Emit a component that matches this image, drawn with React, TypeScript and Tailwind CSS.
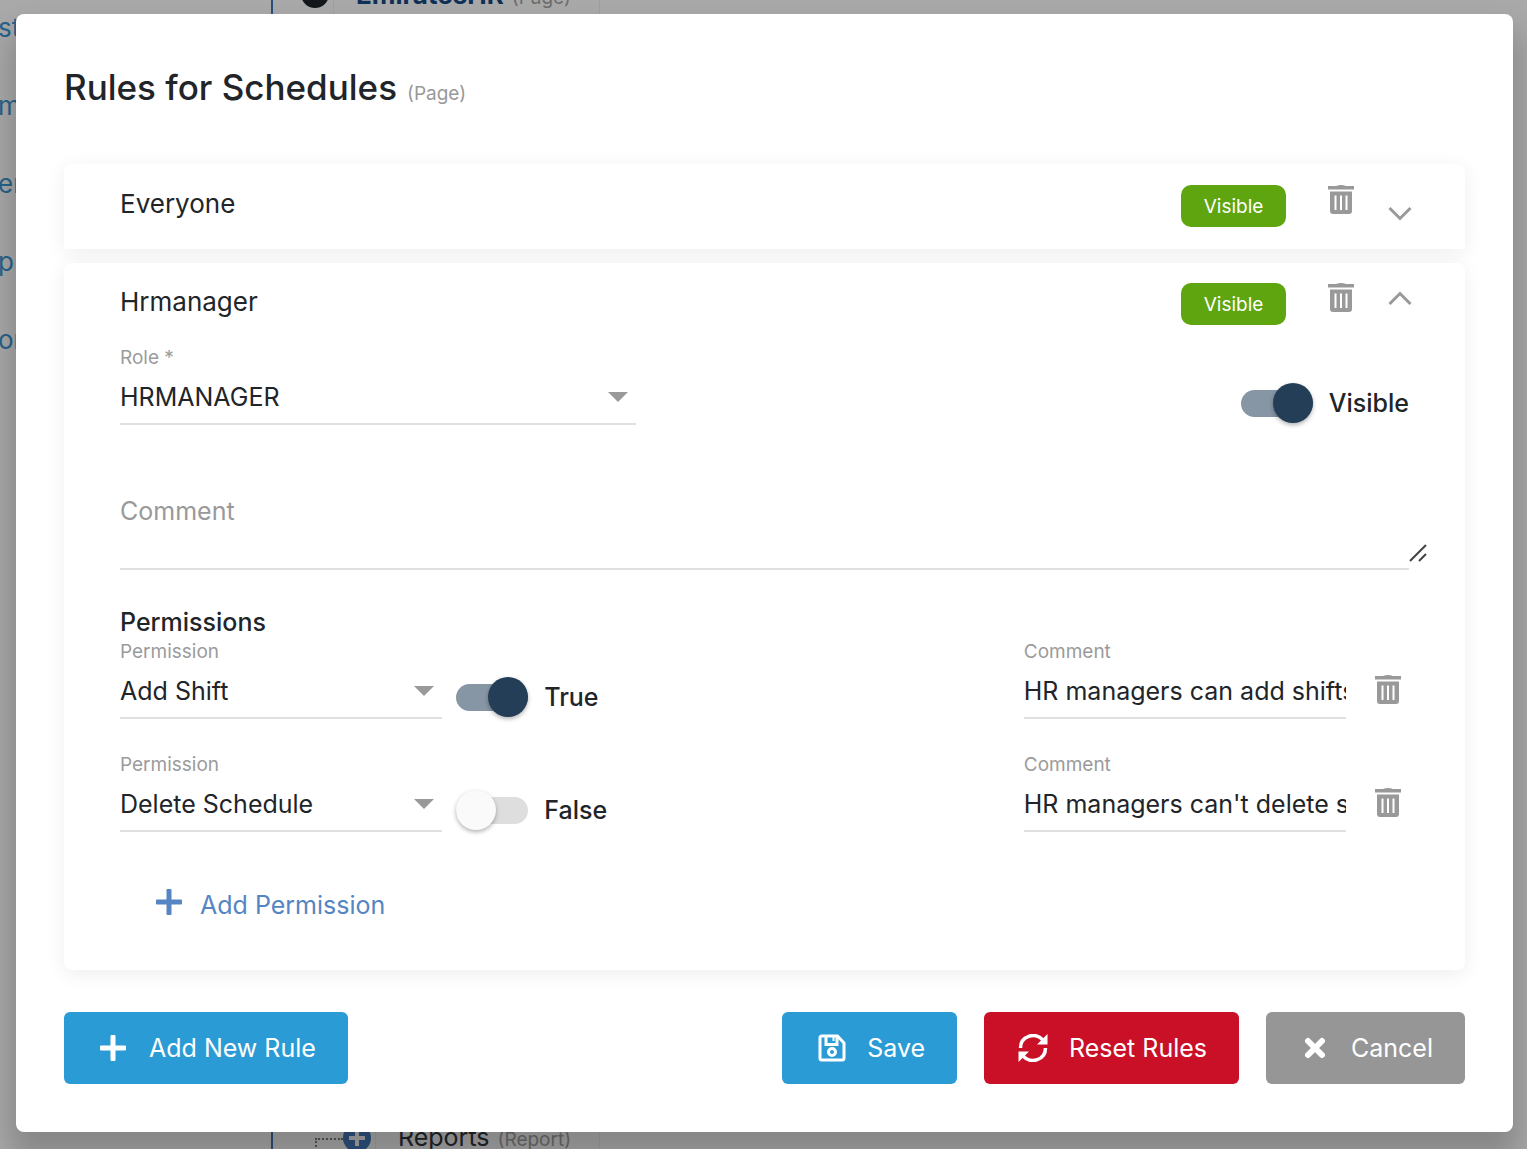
import { useState } from "react";
import type { ReactNode } from "react";

const outline = ["st", "m", "er", "p", "on"];

const initialPermissions = [
  { id: "add", name: "Add Shift", allowed: true, comment: "HR managers can add shifts" },
  { id: "delete", name: "Delete Schedule", allowed: false, comment: "HR managers can't delete schedules" },
];

function TrashIcon() {
  return (
    <svg viewBox="0 0 26 30" className="h-[30px] w-[26px]" fill="currentColor" aria-hidden="true">
      <path d="M8 1q5-2 10 0h8v3.500H0V1z" />
      <path
        fillRule="evenodd"
        d="M2 6.500h22V26q0 3-3 3H5q-3 0-3-3zM6.500 10.500v14.500h2V10.500zM12 10.500v14.500h2V10.500zM17.500 10.500v14.500h2V10.500z"
      />
    </svg>
  );
}

function Chevron({ open }: { open: boolean }) {
  return (
    <svg
      viewBox="0 0 24 40"
      className={open ? "h-10 w-6 rotate-180" : "h-10 w-6"}
      fill="none"
      stroke="currentColor"
      strokeWidth="3"
      aria-hidden="true"
    >
      <path d="M1.500 21l10.500 10.500L22.500 21" />
    </svg>
  );
}

function PlusIcon() {
  return (
    <svg viewBox="0 0 26 26" className="size-[26px]" fill="currentColor" aria-hidden="true">
      <path d="M11.500 0h3q1 0 1 1v9.500H25q1 0 1 1v3q0 1-1 1h-9.500V25q0 1-1 1h-3q-1 0-1-1v-9.500H1q-1 0-1-1v-3q0-1 1-1h9.500V1q0-1 1-1z" />
    </svg>
  );
}

function SaveIcon() {
  return (
    <svg viewBox="0 0 28 28" className="size-7" fill="none" stroke="currentColor" strokeWidth="3" aria-hidden="true">
      <path d="M4 2h15.500l6.500 7v15q0 2-2 2H4q-2 0-2-2V4q0-2 2-2z" />
      <path d="M8 2v8.500h11V2" />
      <path d="M15.500 3v4" strokeWidth="2" />
      <circle cx="14" cy="18" r="3.500" />
    </svg>
  );
}

function RefreshIcon() {
  return (
    <svg viewBox="0 0 30 28" className="h-7 w-[30px]" aria-hidden="true">
      <g fill="none" stroke="currentColor" strokeWidth="3.500">
        <path d="M2.500 14C2.500 2 17-2.500 25 6" />
        <path d="M27.500 14c0 12-14.500 16.500-22.500 8" />
      </g>
      <path d="M29.500 0v10.500H19zM.5 28V17.500H11z" fill="currentColor" />
    </svg>
  );
}

function CloseIcon() {
  return (
    <svg
      viewBox="0 0 22 22"
      className="size-[22px]"
      fill="none"
      stroke="currentColor"
      strokeWidth="6"
      strokeLinecap="round"
      aria-hidden="true"
    >
      <path d="M4 4l14 14M18 4L4 18" />
    </svg>
  );
}

function Switch({
  label,
  checked,
  onChange,
}: {
  label: string;
  checked: boolean;
  onChange: (value: boolean) => void;
}) {
  return (
    <label className="flex h-10 items-center gap-4 text-[25px] font-medium">
      <input
        type="checkbox"
        role="switch"
        checked={checked}
        onChange={(e) => onChange(e.target.checked)}
        className="flex h-[27px] w-[72px] appearance-none items-center rounded-full bg-[#dedede] before:size-10 before:shrink-0 before:rounded-full before:bg-[#fafafa] before:shadow-[0_2px_4px_rgba(0,0,0,0.3)] checked:justify-end checked:bg-[#8796a4] checked:before:bg-[#243e57]"
      />
      <span className="pt-0.5">{label}</span>
    </label>
  );
}

function SelectField({ id, label, value }: { id: string; label: string; value: string }) {
  return (
    <div className="grid">
      <label htmlFor={id} className="pt-px text-[19px] leading-6 text-[#9b9b9b]">
        {label}
      </label>
      <div className="grid items-center border-b-2 border-[#e0e0e0]">
        <select
          id={id}
          defaultValue={value}
          className="col-start-1 row-start-1 h-[53px] w-full appearance-none pt-[3px] text-[25px] outline-none"
        >
          <option>{value}</option>
        </select>
        <svg viewBox="0 0 20 10" className="pointer-events-none col-start-1 row-start-1 mr-2 h-[10px] w-5 justify-self-end fill-[#999]">
          <path d="M0 0h20L10 10z" />
        </svg>
      </div>
    </div>
  );
}

function RuleHeader({ name, open }: { name: string; open: boolean }) {
  return (
    <div className="flex items-start">
      <h2 className="flex-1 text-[26px] leading-[38px]">{name}</h2>
      <span className="flex h-[42px] w-[105px] items-center justify-center rounded-[10px] bg-[#5fa510] pt-0.5 text-[19px] text-white">
        Visible
      </span>
      <button type="button" aria-label={`Delete ${name}`} className="ml-[42px] text-[#999]">
        <TrashIcon />
      </button>
      <button type="button" aria-label={`Toggle ${name}`} aria-expanded={open} className="mr-[-3px] ml-[34px] pt-0.5 text-[#999]">
        <Chevron open={open} />
      </button>
    </div>
  );
}

function ActionButton({ icon, className, children }: { icon: ReactNode; className: string; children: ReactNode }) {
  return (
    <button type="button" className={`flex h-[72px] items-center rounded-md text-[25px] text-white ${className}`}>
      {icon}
      <span className="pt-0.5">{children}</span>
    </button>
  );
}

export default function App() {
  const [visible, setVisible] = useState(true);
  const [permissions, setPermissions] = useState(initialPermissions);

  const setAllowed = (id: string, allowed: boolean) =>
    setPermissions((list) => list.map((p) => (p.id === id ? { ...p, allowed } : p)));

  return (
    <div className="relative min-h-screen overflow-hidden bg-[#a9a9a9] font-[Inter,sans-serif] text-[#212529]">
      {/* Dimmed page behind the dialog */}
      <div className="absolute inset-0 flex overflow-hidden" aria-hidden="true">
        <div className="flex w-[273px] shrink-0 flex-col gap-[38px] border-r-2 border-[#2b4f7c] pt-2 -indent-[2px] text-[26px] leading-10 text-[#28638c]">
          {outline.map((item) => (
            <span key={item}>{item}</span>
          ))}
        </div>
        <div className="flex flex-1 flex-col justify-between">
          <div className="-mt-[26px] flex h-10 items-center">
            <span className="ml-[28px] size-7 rounded-full bg-[#14181c]" />
            <span className="ml-1 flex items-baseline gap-2 border-x border-[#9f9f9f] pr-7 pl-[22px]">
              <span className="text-[26px] font-bold text-[#0f3057]">EmiratesHR</span>
              <span className="text-[19px] text-[#6d6d6d]">(Page)</span>
            </span>
          </div>
          <div className="-mb-2 flex h-10 items-center">
            <span className="ml-[42px] h-5 w-7 self-end border-t-2 border-l-2 border-dotted border-[#555]" />
            <span className="flex size-7 items-center justify-center rounded-full bg-[#2f5280] text-[#a9a9a9]">
              <svg viewBox="0 0 16 16" className="size-4" stroke="currentColor" strokeWidth="4">
                <path d="M8 0v16M0 8h16" />
              </svg>
            </span>
            <span className="ml-1 flex items-baseline gap-2 border-x border-[#9f9f9f] pr-7 pl-[22px]">
              <span className="text-[25px]">Reports</span>
              <span className="text-[19px] text-[#6d6d6d]">(Report)</span>
            </span>
          </div>
        </div>
      </div>

      <main
        role="dialog"
        aria-labelledby="dialog-title"
        className="relative mt-[14px] mr-[14px] mb-[18px] ml-4 rounded-lg bg-white px-12 pt-12 pb-12 shadow-[0_22px_30px_6px_rgba(0,0,0,0.2)]"
      >
        <header className="flex items-baseline gap-[10px]">
          <h1 id="dialog-title" className="text-[35px] leading-[50px] font-medium">
            Rules for Schedules
          </h1>
          <span className="text-[19px] text-[#999]">(Page)</span>
        </header>

        <section className="mt-[52px] rounded-t-lg bg-white px-14 pt-[21px] pb-[22px] shadow-[0_4px_20px_rgba(0,0,0,0.07)]">
          <RuleHeader name="Everyone" open={false} />
        </section>

        <section className="mt-[14px] rounded-lg bg-white px-14 pt-[20px] pb-[42px] shadow-[0_4px_20px_rgba(0,0,0,0.07)]">
          <RuleHeader name="Hrmanager" open />

          <div className="mt-[20px] flex items-end justify-between">
            <div className="w-2/5">
              <SelectField id="role" label="Role *" value="HRMANAGER" />
            </div>
            <div className="pb-0.5">
              <Switch label="Visible" checked={visible} onChange={setVisible} />
            </div>
          </div>

          <div className="relative mt-[65px]">
            <textarea
              aria-label="Comment"
              placeholder="Comment"
              className="block h-[80px] w-full resize-none border-b-2 border-[#e0e0e0] pt-px text-[25px] leading-10 outline-none placeholder:text-[#999]"
            />
            <svg viewBox="0 0 18 18" className="absolute -right-[18px] bottom-2 size-[18px]" fill="none" stroke="#444" strokeWidth="2">
              <path d="M1 17L17 1M10 17l7-7" />
            </svg>
          </div>

          <h3 className="mt-[35px] text-[25px] leading-[34px] font-medium">Permissions</h3>
          <div className="grid gap-[33px]">
            {permissions.map((p) => (
              <div key={p.id} className="flex items-end">
                <div className="w-1/4">
                  <SelectField id={`permission-${p.id}`} label="Permission" value={p.name} />
                </div>
                <div className="ml-[14px] flex-1 pb-0.5">
                  <Switch label={p.allowed ? "True" : "False"} checked={p.allowed} onChange={(v) => setAllowed(p.id, v)} />
                </div>
                <div className="grid w-1/4">
                  <label htmlFor={`comment-${p.id}`} className="pt-px text-[19px] leading-6 text-[#9b9b9b]">
                    Comment
                  </label>
                  <input
                    id={`comment-${p.id}`}
                    defaultValue={p.comment}
                    className="h-[55px] w-full border-b-2 border-[#e0e0e0] pt-px text-[25px] outline-none"
                  />
                </div>
                <button type="button" aria-label={`Delete ${p.name}`} className="mr-2 mb-[14px] ml-[29px] text-[#999]">
                  <TrashIcon />
                </button>
              </div>
            ))}
          </div>

          <button
            type="button"
            className="mt-[52px] ml-9 flex h-11 items-center gap-[18px] text-[25px] text-[#5585c2] [&>svg]:mb-2"
          >
            <PlusIcon />
            Add Permission
          </button>
        </section>

        <footer className="mt-[42px] flex gap-[27px]">
          <ActionButton icon={<PlusIcon />} className="mr-auto gap-[23px] bg-[#2b9bd5] pr-8 pl-9">
            Add New Rule
          </ActionButton>
          <ActionButton icon={<SaveIcon />} className="gap-[21px] bg-[#2b9bd5] pr-8 pl-9">
            Save
          </ActionButton>
          <ActionButton icon={<RefreshIcon />} className="gap-[21px] bg-[#c91026] pr-8 pl-[34px]">
            Reset Rules
          </ActionButton>
          <ActionButton icon={<CloseIcon />} className="gap-[25px] bg-[#969696] pr-8 pl-[38px]">
            Cancel
          </ActionButton>
        </footer>
      </main>
    </div>
  );
}
